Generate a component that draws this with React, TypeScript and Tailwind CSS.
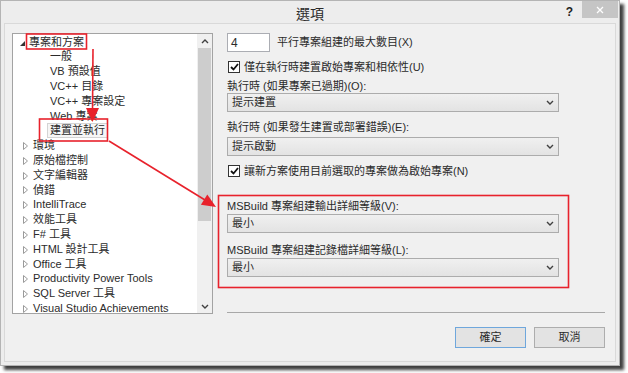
const FONT = "font-['Liberation_Sans','Noto_Sans_CJK_TC',sans-serif]";

type Node = { label: string; level: 0 | 1; open?: boolean; selected?: boolean };

const tree: Node[] = [
  { label: "專案和方案", level: 0, open: true },
  { label: "一般", level: 1 },
  { label: "VB 預設值", level: 1 },
  { label: "VC++ 目錄", level: 1 },
  { label: "VC++ 專案設定", level: 1 },
  { label: "Web 專案", level: 1 },
  { label: "建置並執行", level: 1, selected: true },
  { label: "環境", level: 0 },
  { label: "原始檔控制", level: 0 },
  { label: "文字編輯器", level: 0 },
  { label: "偵錯", level: 0 },
  { label: "IntelliTrace", level: 0 },
  { label: "效能工具", level: 0 },
  { label: "F# 工具", level: 0 },
  { label: "HTML 設計工具", level: 0 },
  { label: "Office 工具", level: 0 },
  { label: "Productivity Power Tools", level: 0 },
  { label: "SQL Server 工具", level: 0 },
  { label: "Visual Studio Achievements", level: 0 },
];

function Chevron({ up = false }: { up?: boolean }) {
  return (
    <svg width="8" height="5" viewBox="0 0 8 5">
      <polyline
        points={up ? "1,4 4,1 7,4" : "1,1 4,4 7,1"}
        fill="none"
        stroke="#404040"
        strokeWidth="1.4"
      />
    </svg>
  );
}

function TreeRow({ node }: { node: Node }) {
  if (node.level === 1) {
    return (
      <div className="flex h-[14.8px] items-center">
        {node.selected ? (
          <span className="ml-[34px] border border-[#d4d4d4] bg-[#f6f6f6] px-[2px] leading-[13px]">{node.label}</span>
        ) : (
          <span className="ml-[37px]">{node.label}</span>
        )}
      </div>
    );
  }
  if (node.open) {
    return (
      <div className="flex h-[14.8px] items-center">
        <svg width="5" height="5" viewBox="0 0 5 5" className="ml-[7px] mt-[3px]">
          <polygon points="5,0 5,5 0,5" fill="#333" />
        </svg>
        <span className="ml-[4px]">{node.label}</span>
      </div>
    );
  }
  return (
    <div className="flex h-[14.8px] items-center">
      <svg width="5" height="8" viewBox="0 0 5 8" className="ml-[10px] mt-[1px]">
        <polygon points="0.5,0.5 4.5,4 0.5,7.5" fill="none" stroke="#9a9a9a" strokeWidth="1" />
      </svg>
      <span className="ml-[5px]">{node.label}</span>
    </div>
  );
}

function Select({ value }: { value: string }) {
  return (
    <div className="flex h-[19px] w-[332px] items-center justify-between border border-[#acacac] bg-gradient-to-b from-[#f0f0f0] to-[#e3e3e3] pl-[4px] pr-[4px]">
      <span>{value}</span>
      <Chevron />
    </div>
  );
}

function Check({ label }: { label: string }) {
  return (
    <div className="flex h-[14px] items-center">
      <span className="ml-[1px] flex h-[12px] w-[12px] items-center justify-center border border-[#333] bg-white">
        <svg width="9" height="8" viewBox="0 0 9 8">
          <polyline points="1,4 3.5,6.5 8,1" fill="none" stroke="#111" strokeWidth="1.8" />
        </svg>
      </span>
      <span className="ml-[4px]">{label}</span>
    </div>
  );
}

export default function App() {
  return (
    <div className={`${FONT} h-[373px] w-[628px] bg-white text-[11px] text-[#2b2b2b]`}>
      <div className="relative flex h-[366px] w-[620px] flex-col border border-[#b4b4b4] bg-[#ededed] shadow-[4px_4px_3px_rgba(0,0,0,0.75)]">
        {/* title bar */}
        <div className="relative flex h-[22px] items-start justify-center">
          <span className="mt-[3px] text-[14px] text-[#2a2a2a]">選項</span>
          <div className="absolute right-[1px] top-0 flex items-start">
            <span className="mr-[9px] mt-[2px] text-[12px] font-bold text-[#222]">?</span>
            <div className="flex h-[17px] w-[36px] items-center justify-center bg-[#c5c5c5]">
              <svg width="8" height="8" viewBox="0 0 8 8">
                <path d="M1 1 L7 7 M7 1 L1 7" stroke="#fff" strokeWidth="1.3" />
              </svg>
            </div>
          </div>
        </div>

        {/* body */}
        <div className="mx-[3px] mb-[3px] flex flex-1 flex-col border border-[#d9d9d9] bg-[#f0f0f0] pl-[7px] pr-[10px] pt-[9px]">
          <div className="flex h-[281px]">
            {/* tree */}
            <div className="flex w-[201px] border border-[#a3a3a3] bg-white">
              <div className="flex-1 overflow-hidden pt-[0.5px]">
                {tree.map((n) => (
                  <TreeRow key={n.label} node={n} />
                ))}
              </div>
              <div className="flex w-[15px] flex-col bg-[#f0f0f0]">
                <div className="flex h-[14px] items-center justify-center">
                  <Chevron up />
                </div>
                <div className="flex-1">
                  <div className="mx-[1px] h-[173px] bg-[#cdcdcd]" />
                </div>
                <div className="flex h-[14px] items-center justify-center">
                  <Chevron />
                </div>
              </div>
            </div>

            {/* settings */}
            <div className="ml-[14px] flex flex-1 flex-col">
              <div className="flex h-[19px] items-center">
                <div className="flex h-[19px] w-[43px] items-center border border-[#abadb3] bg-white pl-[3px] text-[12px]">4</div>
                <span className="ml-[7px]">平行專案組建的最大數目(X)</span>
              </div>
              <div className="mt-[8px]">
                <Check label="僅在執行時建置啟始專案和相依性(U)" />
              </div>
              <div className="mt-[5px] flex h-[14px] items-center">執行時 (如果專案已過期)(O):</div>
              <Select value="提示建置" />
              <div className="mt-[8px] flex h-[14px] items-center">執行時 (如果發生建置或部署錯誤)(E):</div>
              <div className="mt-[3px]">
                <Select value="提示啟動" />
              </div>
              <div className="mt-[8px]">
                <Check label="讓新方案使用目前選取的專案做為啟始專案(N)" />
              </div>
              <div className="mt-[21px] flex h-[14px] items-center">MSBuild 專案組建輸出詳細等級(V):</div>
              <div className="mt-[1px]">
                <Select value="最小" />
              </div>
              <div className="mt-[10px] flex h-[14px] items-center">MSBuild 專案組建記錄檔詳細等級(L):</div>
              <div className="mt-[1px]">
                <Select value="最小" />
              </div>
              <div className="mb-[1px] mt-auto h-px bg-[#a8a8a8]" />
            </div>
          </div>

          {/* buttons */}
          <div className="mt-[13px] flex justify-end gap-[8px]">
            <button className="h-[21px] w-[71px] border border-[#6fa7dc] bg-[#e3e3e3] text-[11px]">確定</button>
            <button className="h-[21px] w-[71px] border border-[#adadad] bg-[#e3e3e3] text-[11px]">取消</button>
          </div>
        </div>

        {/* red annotations */}
        <svg className="pointer-events-none absolute left-[-1px] top-[-1px]" width="628" height="373" viewBox="0 0 628 373">
          <g stroke="#e8222c" strokeWidth="1.6" fill="none">
            <rect x="26.5" y="34" width="60" height="15" />
            <rect x="39.5" y="119" width="68" height="22" />
            <rect x="218.5" y="195.5" width="350" height="92" />
            <line x1="93" y1="49" x2="92.5" y2="111" />
            <line x1="109" y1="141" x2="205" y2="200" />
          </g>
          <polygon points="86,108 99,108 92.5,122" fill="#e8222c" />
          <polygon points="216,207 200.9,204.7 207.3,194.5" fill="#e8222c" />
        </svg>
      </div>
    </div>
  );
}
